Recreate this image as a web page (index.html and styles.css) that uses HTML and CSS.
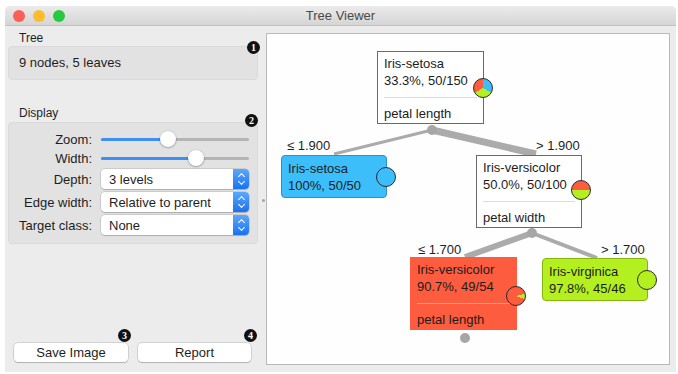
FILE: index.html
```html
<!DOCTYPE html>
<html lang="en">
<head>
    <meta charset="UTF-8">
    <title>Tree Viewer</title>
    <link rel="stylesheet" href="styles.css">
</head>
<body>
    <div class="window">
        <div class="titlebar">
            <div class="lights">
                <span class="light close"></span>
                <span class="light minimize"></span>
                <span class="light zoom"></span>
            </div>
            <div class="title">Tree Viewer</div>
        </div>

        <div class="main">
            <aside class="controls">
                <section class="group">
                    <div class="group-title">Tree</div>
                    <div class="group-box info">9 nodes, 5 leaves</div>
                    <span class="badge badge-tree">1</span>
                </section>

                <section class="group display">
                    <div class="group-title">Display</div>
                    <div class="group-box form">
                        <label>Zoom:</label>
                        <div class="slider"><span class="fill" style="width: 67px"></span><span class="thumb" style="left: 67px"></span></div>

                        <label>Width:</label>
                        <div class="slider"><span class="fill" style="width: 95px"></span><span class="thumb" style="left: 95px"></span></div>

                        <label>Depth:</label>
                        <div class="combo"><span class="value">3 levels</span><span class="arrows"><i class="up"></i><i class="down"></i></span></div>

                        <label>Edge width:</label>
                        <div class="combo"><span class="value">Relative to parent</span><span class="arrows"><i class="up"></i><i class="down"></i></span></div>

                        <label>Target class:</label>
                        <div class="combo"><span class="value">None</span><span class="arrows"><i class="up"></i><i class="down"></i></span></div>
                    </div>
                    <span class="badge badge-display">2</span>
                </section>

                <div class="spacer"></div>

                <div class="buttons">
                    <button class="btn">Save Image<span class="badge badge-save">3</span></button>
                    <button class="btn">Report<span class="badge badge-report">4</span></button>
                </div>
            </aside>

            <div class="splitter"><span class="handle"></span></div>

            <main class="canvas">
                <svg class="edges" width="404" height="332">
                    <line x1="166" y1="97" x2="68" y2="121" stroke="#ababab" stroke-width="3"/>
                    <line x1="166" y1="97" x2="270" y2="121" stroke="#ababab" stroke-width="7"/>
                    <line x1="266" y1="200" x2="199" y2="224" stroke="#ababab" stroke-width="6"/>
                    <line x1="266" y1="200" x2="331" y2="225" stroke="#ababab" stroke-width="4"/>
                    <circle cx="166" cy="97" r="5" fill="#a6a6a6"/>
                    <circle cx="266" cy="200" r="5" fill="#a6a6a6"/>
                    <circle cx="199" cy="305" r="5" fill="#a6a6a6"/>
                </svg>

                <div class="node inner root">
                    <div class="line">Iris-setosa</div>
                    <div class="line">33.3%, 50/150</div>
                    <hr>
                    <div class="line">petal length</div>
                    <span class="pie pie-root"></span>
                </div>

                <div class="split s-left">≤ 1.900</div>
                <div class="node leaf setosa">
                    <div class="line">Iris-setosa</div>
                    <div class="line">100%, 50/50</div>
                    <span class="pie pie-setosa"></span>
                </div>

                <div class="split s-right">&gt; 1.900</div>
                <div class="node inner versicolor">
                    <div class="line">Iris-versicolor</div>
                    <div class="line">50.0%, 50/100</div>
                    <hr>
                    <div class="line">petal width</div>
                    <span class="pie pie-half"></span>
                </div>

                <div class="split s-low-left">≤ 1.700</div>
                <div class="node inner versicolor-leaf">
                    <div class="line">Iris-versicolor</div>
                    <div class="line">90.7%, 49/54</div>
                    <hr>
                    <div class="line">petal length</div>
                    <span class="pie pie-versicolor"></span>
                </div>

                <div class="split s-low-right">&gt; 1.700</div>
                <div class="node leaf virginica">
                    <div class="line">Iris-virginica</div>
                    <div class="line">97.8%, 45/46</div>
                    <span class="pie pie-virginica"></span>
                </div>
            </main>
        </div>
    </div>
</body>
</html>
```

FILE: styles.css
```css
body {
    margin: 0;
    background-color: #ffffff;
    font-family: "Liberation Sans", Arial, sans-serif;
    font-size: 12px;
    color: #1e1e1e;
}
.window {
    margin: 6px 2px 0 5px;
    width: 671px;
    height: 366px;
    background-color: #ececec;
    border-radius: 5px 5px 0 0;
    display: flex;
    flex-direction: column;
    overflow: hidden;
}
.titlebar {
    height: 20px;
    flex-shrink: 0;
    background: linear-gradient(#ebebeb, #d5d5d5);
    border-bottom: 1px solid #c2c2c2;
    box-sizing: border-box;
    display: flex;
    align-items: center;
    position: relative;
}
.lights {
    display: flex;
    gap: 8px;
    padding-left: 8px;
}
.light {
    width: 12px;
    height: 12px;
    border-radius: 50%;
}
.close { background-color: #fc5f57; }
.minimize { background-color: #fdbc2e; }
.zoom { background-color: #28c840; }
.title {
    position: absolute;
    left: 0;
    right: 0;
    text-align: center;
    font-size: 13px;
    color: #4a4a4a;
}
.main {
    flex: 1;
    display: flex;
}

/* left control column */
.controls {
    width: 257px;
    padding: 5px 4px 10px 3px;
    box-sizing: border-box;
    display: flex;
    flex-direction: column;
}
.group {
    position: relative;
}
.group-title {
    height: 15px;
    padding-left: 11px;
    font-size: 12px;
    line-height: 15px;
}
.group-box {
    background-color: #e2e2e2;
    border: 1px solid #dadada;
    border-radius: 4px;
    box-sizing: border-box;
}
.info {
    height: 34px;
    padding-left: 10px;
    line-height: 32px;
    font-size: 13px;
}
.display {
    margin-top: 26px;
}
.display .group-title {
    height: 16px;
}
.form {
    height: 122px;
    padding: 8px 10px 0 0;
    display: grid;
    grid-template-columns: 83px 148px;
    grid-template-rows: 16px 16px 20px 20px 20px;
    column-gap: 9px;
    row-gap: 3px;
    align-items: center;
}
.form label {
    text-align: right;
    font-size: 13px;
}
.slider {
    position: relative;
    height: 3px;
    background-color: #b5b5b5;
    border-radius: 2px;
}
.slider .fill {
    position: absolute;
    left: 0;
    top: 0;
    bottom: 0;
    background-color: #3b8ff7;
    border-radius: 2px;
}
.slider .thumb {
    position: absolute;
    top: -7px;
    width: 16px;
    height: 16px;
    margin-left: -8px;
    border-radius: 50%;
    background-color: #ffffff;
    box-shadow: 0 0.5px 2px rgba(0, 0, 0, 0.45);
}
.combo {
    height: 20px;
    background-color: #ffffff;
    border-radius: 4px;
    box-shadow: 0 0 0 0.5px rgba(0, 0, 0, 0.2), 0 1px 1px rgba(0, 0, 0, 0.15);
    display: flex;
    align-items: center;
    overflow: hidden;
}
.combo .value {
    flex: 1;
    padding-left: 8px;
    font-size: 13px;
}
.arrows {
    width: 16px;
    height: 100%;
    background: linear-gradient(#5aa8fb, #1a72f0);
    display: flex;
    flex-direction: column;
    align-items: center;
    justify-content: center;
    gap: 3px;
}
.arrows i {
    width: 4px;
    height: 4px;
    border-left: 1.2px solid #ffffff;
    border-top: 1.2px solid #ffffff;
}
.arrows .up {
    transform: translateY(1px) rotate(45deg);
}
.arrows .down {
    transform: translateY(-2px) rotate(225deg);
}
.spacer {
    flex: 1;
}
.buttons {
    display: flex;
    gap: 10px;
    padding-left: 6px;
}
.btn {
    position: relative;
    height: 19px;
    width: 114px;
    padding: 0;
    background-color: #ffffff;
    border: none;
    border-radius: 4px;
    box-shadow: 0 0 0 0.5px rgba(0, 0, 0, 0.22), 0 1px 1px rgba(0, 0, 0, 0.15);
    font-family: "Liberation Sans", Arial, sans-serif;
    font-size: 13px;
    color: #1e1e1e;
}
.btn + .btn {
    width: 113px;
}
.badge {
    position: absolute;
    width: 13px;
    height: 13px;
    border-radius: 50%;
    background-color: #111111;
    color: #ffffff;
    font-family: "Liberation Serif", serif;
    font-size: 10px;
    font-weight: bold;
    line-height: 13px;
    text-align: center;
}
.badge-tree { right: -2px; top: 10px; }
.badge-display { right: 0; top: 8px; }
.badge-save { right: -3px; top: -14px; }
.badge-report { right: -6px; top: -14px; }
.splitter {
    width: 4px;
    display: flex;
    align-items: center;
}
.handle {
    width: 3px;
    height: 3px;
    border-radius: 50%;
    background-color: #a5a5a5;
    margin-top: 2px;
}

/* tree canvas */
.canvas {
    position: relative;
    width: 404px;
    margin: 7px 6px 7px 0;
    background-color: #fefefe;
    border: 1px solid #b9b9b9;
    box-sizing: border-box;
}
.edges {
    position: absolute;
    left: -1px;
    top: -1px;
}
.node {
    position: absolute;
    box-sizing: border-box;
    border: 1px solid #6a6a6a;
    padding: 3px 6px 0 6px;
    font-size: 13px;
    color: #1c1c1c;
}
.node .line {
    height: 17px;
    line-height: 17px;
    white-space: nowrap;
}
.node hr {
    margin: 8px 0 7px 0;
    border: none;
    border-top: 1px solid #dcdcdc;
}
.inner {
    background-color: #ffffff;
    height: 73px;
    width: 107px;
}
.leaf {
    height: 43px;
    width: 106px;
    border-radius: 4px;
    padding-top: 4px;
}
.root { left: 110px; top: 17px; }
.versicolor { left: 209px; top: 121px; width: 106px; }
.setosa {
    left: 14px;
    top: 121px;
    background-color: #3cbefa;
    border-color: #2a93c6;
}
.versicolor-leaf {
    left: 143px;
    top: 223px;
    background-color: #fe5c3e;
    border-color: #fe5c3e;
}
.versicolor-leaf hr {
    border-top-color: #ff9a85;
}
.virginica {
    left: 275px;
    top: 224px;
    background-color: #b4f01f;
    border-color: #84b60f;
}
.pie {
    position: absolute;
    right: -10px;
    top: 50%;
    width: 20px;
    height: 20px;
    margin-top: -10px;
    border-radius: 50%;
    box-sizing: border-box;
    border: 1px solid #2a2a2a;
}
.root .pie { margin-top: 0; top: 26px; }
.versicolor .pie { margin-top: 0; top: 24px; }
.versicolor-leaf .pie { margin-top: 0; top: 28px; }
.pie-root {
    background: conic-gradient(#3cbefa 0deg 120deg, #b4f01f 120deg 240deg, #fe5c3e 240deg 360deg);
}
.pie-setosa { background-color: #3cbefa; }
.pie-half {
    background: conic-gradient(from 270deg, #fe5c3e 0deg 180deg, #b4f01f 180deg 360deg);
}
.pie-versicolor {
    background: conic-gradient(from 75deg, #b4f01f 0deg 34deg, #fe5c3e 34deg 360deg);
}
.pie-virginica { background-color: #b4f01f; }
.split {
    position: absolute;
    font-size: 13px;
    line-height: 14px;
    white-space: nowrap;
}
.s-left { left: 20px; top: 105px; }
.s-right { left: 269px; top: 105px; }
.s-low-left { left: 151px; top: 209px; }
.s-low-right { left: 334px; top: 209px; }
```
